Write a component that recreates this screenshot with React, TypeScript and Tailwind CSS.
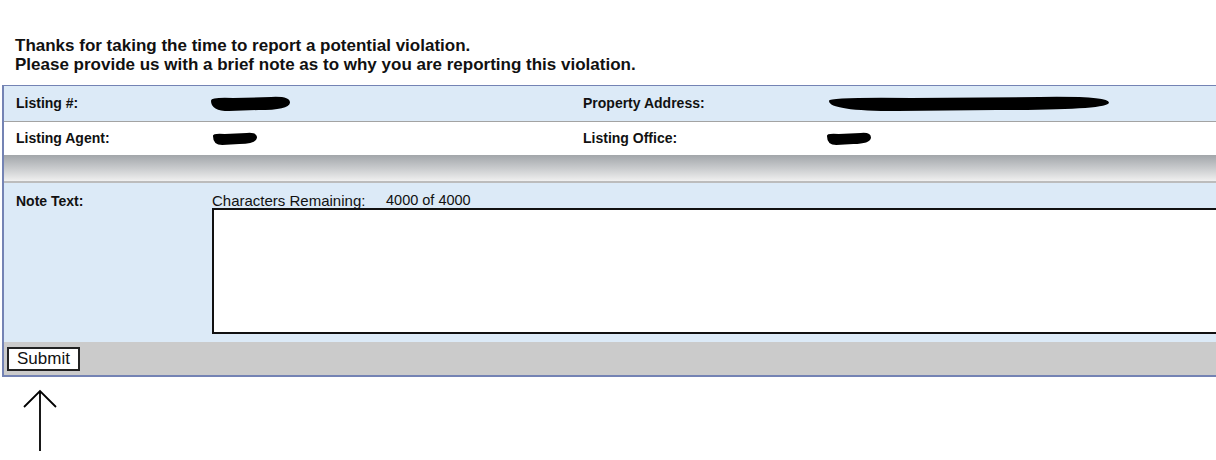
import React from "react";

function Blob({ w, h, className = "" }: { w: number; h: number; className?: string }) {
  return (
    <svg width={w} height={h} viewBox={`0 0 ${w} ${h}`} className={className}>
      <path
        d={`M3 ${h * 0.35} Q2 2 ${w * 0.3} 3 L${w * 0.75} 2 Q${w - 2} 1 ${w - 2} ${h * 0.45} Q${w - 3} ${h - 2} ${w * 0.6} ${h - 2} L${w * 0.25} ${h - 1} Q3 ${h - 1} 3 ${h * 0.35} Z`}
        fill="#000"
      />
    </svg>
  );
}

export default function App() {
  return (
    <div className="w-[1216px] h-[460px] overflow-hidden bg-white font-['Liberation_Sans',Arial,sans-serif] text-black">
      <div className="pt-[36px] pl-[15px] text-[17px] font-bold leading-[19px] text-[#111]">
        <div>Thanks for taking the time to report a potential violation.</div>
        <div>Please provide us with a brief note as to why you are reporting this violation.</div>
      </div>
      <div className="ml-[2px] mt-[11px] w-[1240px] border-2 border-r-0 border-[#7483b4] border-t-[1px] border-b-[2px] text-[14px] font-bold text-[#111]">
        <div className="flex h-[36px] items-center bg-[#dceaf7] border-b border-[#a3a3a3]">
          <div className="w-[208px] shrink-0 pl-[12px]">Listing #:</div>
          <div className="w-[371px] shrink-0">
            <Blob w={84} h={17} className="-ml-[4px]" />
          </div>
          <div className="w-[245px] shrink-0">Property Address:</div>
          <div>
            <Blob w={285} h={17} className="-ml-[2px]" />
          </div>
        </div>
        <div className="flex h-[33px] items-center bg-white">
          <div className="w-[208px] shrink-0 pl-[12px]">Listing Agent:</div>
          <div className="w-[371px] shrink-0">
            <Blob w={49} h={15} className="-ml-[2px]" />
          </div>
          <div className="w-[245px] shrink-0">Listing Office:</div>
          <div>
            <Blob w={49} h={15} className="-ml-[4px]" />
          </div>
        </div>
        <div className="h-[28px] bg-gradient-to-b from-[#a2a6aa] to-[#f0f0f0] border-b-2 border-[#bcbcbc]" />
        <div className="flex h-[159px] bg-[#dceaf7]">
          <div className="w-[208px] shrink-0 pl-[12px] pt-[10px] leading-[16px]">Note Text:</div>
          <div className="flex-1 pt-[10px]">
            <div className="flex font-normal text-[15px] leading-[15px] text-[#111]">
              <span className="w-[174px] shrink-0">Characters Remaining:</span>
              <span className="text-[14.5px]">4000 of 4000</span>
            </div>
            <textarea className="block w-[1030px] h-[126px] border-2 border-[#111] bg-white resize-none outline-none" />
          </div>
        </div>
        <div className="flex h-[33px] items-center bg-[#cbcbcb] pl-[3px]">
          <button className="h-[24px] w-[73px] border-2 border-[#222] bg-white text-[17px] font-normal text-[#111] leading-none">
            Submit
          </button>
        </div>
      </div>
      <svg width="80" height="80" className="mt-[11px]" viewBox="0 0 80 80">
        <path d="M40 63 L40 3 M24 19 L40 3 L56 19" stroke="#000" strokeWidth="1.8" fill="none" />
      </svg>
    </div>
  );
}
